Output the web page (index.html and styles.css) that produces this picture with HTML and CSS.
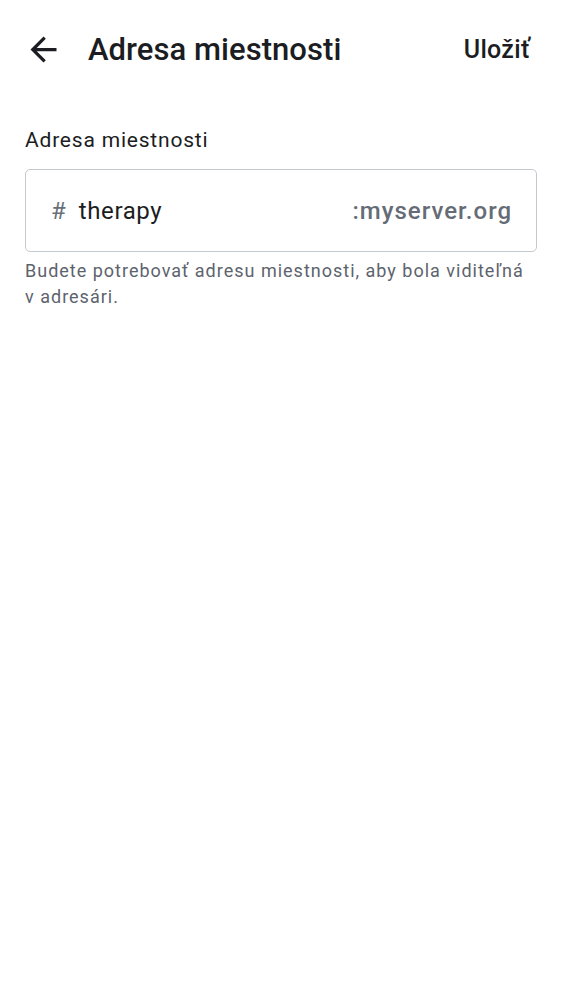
FILE: index.html
```html
<!DOCTYPE html>
<html lang="sk">
<head>
<meta charset="utf-8">
<title>Adresa miestnosti</title>
<link rel="stylesheet" href="styles.css">
</head>
<body>
<header class="topbar">
  <button class="back" aria-label="Späť">
    <svg viewBox="0 0 24 24" width="39" height="39"><path d="M20 11H7.83l5.59-5.59L12 4l-8 8 8 8 1.41-1.41L7.83 13H20v-2z" fill="#1b1d22"/></svg>
  </button>
  <h1 class="title">Adresa miestnosti</h1>
  <button class="save">Uložiť</button>
</header>
<main class="content">
  <label class="label">Adresa miestnosti</label>
  <div class="field">
    <span class="hash">#</span>
    <span class="value">therapy</span>
    <span class="server">:myserver.org</span>
  </div>
  <p class="help">Budete potrebovať adresu miestnosti, aby bola viditeľná v adresári.</p>
</main>
</body>
</html>
```
FILE: styles.css
```css
html, body {
  margin: 0;
  padding: 0;
  background: #ffffff;
}
body {
  font-family: Roboto, "Noto Sans", sans-serif;
  color: #1b1d22;
}
.topbar {
  display: flex;
  align-items: center;
  height: 98px;
  padding: 0 20px 0 24px;
}
.back {
  border: 0;
  background: none;
  padding: 0;
  width: 39px;
  height: 39px;
  display: flex;
}
.title {
  margin: 0 0 0 25px;
  font-size: 31px;
  font-weight: 500;
  flex: 1;
  letter-spacing: 0.05px;
}
.save {
  border: 0;
  background: none;
  font-family: inherit;
  font-size: 25px;
  font-weight: 500;
  letter-spacing: 0.3px;
  color: #1b1d22;
  padding: 0 12px;
}
.content {
  padding: 28px 25px 0;
}
.label {
  display: block;
  font-size: 21px;
  letter-spacing: 0.8px;
  line-height: 28px;
}
.field {
  margin-top: 15px;
  height: 81px;
  border: 1px solid #c5c9d0;
  border-radius: 5px;
  display: flex;
  align-items: center;
  padding: 0 24px 0 25px;
  font-size: 24px;
}
.hash {
  color: #6a707a;
  margin-right: 13px;
}
.value {
  flex: 1;
  letter-spacing: 0.6px;
}
.server {
  color: #656c76;
  font-weight: 500;
  letter-spacing: 1px;
}
.help {
  margin: 6px 0 0;
  max-width: 505px;
  font-size: 18px;
  line-height: 26px;
  letter-spacing: 1px;
  color: #5d636d;
}
```
